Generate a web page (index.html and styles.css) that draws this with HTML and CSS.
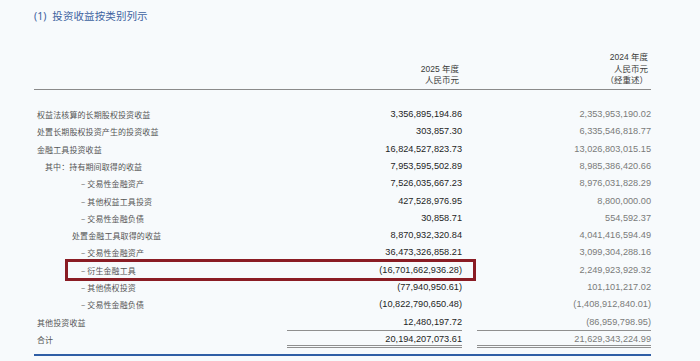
FILE: index.html
```html
<!DOCTYPE html>
<html lang="zh-CN">
<head>
    <meta charset="UTF-8">
    <meta name="viewport" content="width=device-width, initial-scale=1.0">
    <title>投资收益按类别列示</title>
    <link rel="stylesheet" href="styles.css">
</head>
<body>
    <div class="titulo"><span class="num">(1)</span>投资收益按类别列示</div>

    <div class="tabela">
        <div class="cabecalho">
            <div class="rotulo"></div>
            <div class="col1">2025 年度<br>人民币元</div>
            <div class="col2">2024 年度<br>人民币元<br>（经重述）</div>
        </div>

        <div class="linhas">
            <div class="linha">
                <div class="rotulo">权益法核算的长期股权投资收益</div>
                <div class="col1">3,356,895,194.86</div>
                <div class="col2">2,353,953,190.02</div>
            </div>
            <div class="linha">
                <div class="rotulo">处置长期股权投资产生的投资收益</div>
                <div class="col1">303,857.30</div>
                <div class="col2">6,335,546,818.77</div>
            </div>
            <div class="linha">
                <div class="rotulo">金融工具投资收益</div>
                <div class="col1">16,824,527,823.73</div>
                <div class="col2">13,026,803,015.15</div>
            </div>
            <div class="linha">
                <div class="rotulo nivel1">其中：持有期间取得的收益</div>
                <div class="col1">7,953,595,502.89</div>
                <div class="col2">8,985,386,420.66</div>
            </div>
            <div class="linha">
                <div class="rotulo nivel3">– 交易性金融资产</div>
                <div class="col1">7,526,035,667.23</div>
                <div class="col2">8,976,031,828.29</div>
            </div>
            <div class="linha">
                <div class="rotulo nivel3">– 其他权益工具投资</div>
                <div class="col1">427,528,976.95</div>
                <div class="col2">8,800,000.00</div>
            </div>
            <div class="linha">
                <div class="rotulo nivel3">– 交易性金融负债</div>
                <div class="col1">30,858.71</div>
                <div class="col2">554,592.37</div>
            </div>
            <div class="linha">
                <div class="rotulo nivel2">处置金融工具取得的收益</div>
                <div class="col1">8,870,932,320.84</div>
                <div class="col2">4,041,416,594.49</div>
            </div>
            <div class="linha">
                <div class="rotulo nivel3">– 交易性金融资产</div>
                <div class="col1">36,473,326,858.21</div>
                <div class="col2">3,099,304,288.16</div>
            </div>
            <div class="linha destaque">
                <div class="rotulo nivel3">– 衍生金融工具</div>
                <div class="col1">(16,701,662,936.28)</div>
                <div class="col2">2,249,923,929.32</div>
            </div>
            <div class="linha">
                <div class="rotulo nivel3">– 其他债权投资</div>
                <div class="col1">(77,940,950.61)</div>
                <div class="col2">101,101,217.02</div>
            </div>
            <div class="linha">
                <div class="rotulo nivel3">– 交易性金融负债</div>
                <div class="col1">(10,822,790,650.48)</div>
                <div class="col2">(1,408,912,840.01)</div>
            </div>
            <div class="linha subtotal">
                <div class="rotulo">其他投资收益</div>
                <div class="col1">12,480,197.72</div>
                <div class="col2">(86,959,798.95)</div>
            </div>
            <div class="linha total">
                <div class="rotulo">合计</div>
                <div class="col1">20,194,207,073.61</div>
                <div class="col2">21,629,343,224.99</div>
            </div>
        </div>
    </div>
</body>
</html>
```

FILE: styles.css
```css
* { margin: 0; padding: 0; box-sizing: border-box; }
body { background-color: #f7fafc; font-family: 'Liberation Sans', 'Noto Sans CJK SC', sans-serif; width: 700px; height: 361px; overflow: hidden; }

.titulo { padding: 9px 0 0 34px; line-height: 14px; font-size: 10.5px; color: #3d62a0; font-family: 'Noto Sans CJK SC', sans-serif; letter-spacing: 0.1px; }
.titulo .num { margin-right: 6px; font-family: 'Noto Sans', sans-serif; letter-spacing: 0; }

.tabela { width: 617px; margin: 29px 0 0 34px; border-bottom: 2px solid #2f5ea6; padding-bottom: 6px; }

.cabecalho { display: grid; grid-template-columns: 253px 175px 189px; align-items: end; border-bottom: 1px solid #8a8a8a; padding-bottom: 2px; font-family: 'Liberation Sans', 'Noto Sans CJK SC', sans-serif; font-size: 8.5px; line-height: 11.5px; color: #3a3a3a; }
.cabecalho .col1, .cabecalho .col2 { text-align: right; padding-right: 3px; }
.cabecalho .col2 { margin-left: 15px; }

.linhas { padding-top: 16.6px; }
.linha { display: grid; grid-template-columns: 253px 175px 189px; height: 17.3px; line-height: 17.3px; }
.linha .rotulo { font-family: 'Noto Sans CJK SC', sans-serif; font-size: 8px; letter-spacing: 0.1px; color: #555; padding-left: 3px; }
.rotulo.nivel1 { padding-left: 11px; }
.rotulo.nivel2 { padding-left: 38px; }
.rotulo.nivel3 { padding-left: 47px; }
.linha .col1, .linha .col2 { text-align: right; font-size: 9.2px; height: 17.3px; }
.linha .col1 { color: #1e1e1e; }
.linha .col2 { color: #7a7a7a; margin-left: 15px; }

.subtotal .col1, .subtotal .col2 { border-bottom: 1px solid #8f8f8f; }
.total .col1, .total .col2 { border-bottom: 3px double #8f8f8f; line-height: 17px; }

.destaque { position: relative; }
.destaque::after { content: ''; position: absolute; left: 31px; top: -3px; width: 411px; height: 22px; border: 3px solid #8a1c24; box-sizing: border-box; }
```
